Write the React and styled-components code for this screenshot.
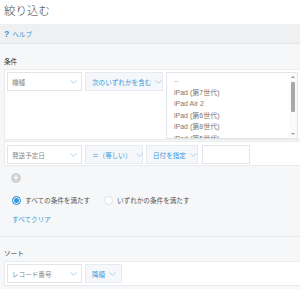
import React from "react";
import styled, { createGlobalStyle } from "styled-components";

const Global = createGlobalStyle`
  html, body { margin: 0; padding: 0; background: #fff; }
  body { font-family: "Liberation Sans", "Noto Sans CJK JP", sans-serif; width: 300px; height: 289px; overflow: hidden; }
  * { box-sizing: border-box; }
`;

const Title = styled.div`
  height: 24px;
  padding: 2px 0 0 4px;
  font-size: 11.5px;
  line-height: 16px;
  color: #444;
  font-family: "Noto Sans CJK JP", sans-serif;
  font-weight: 300;
`;

const HelpBar = styled.div`
  height: 20px;
  background: #eef0f2;
  border-bottom: 1px solid #e4e6e8;
  padding-left: 4px;
  display: flex;
  align-items: center;
  gap: 3px;
  color: #3498db;
  font-size: 6.6px;
  font-family: "Noto Sans CJK JP", sans-serif;
`;

const Q = styled.span`
  font-weight: bold;
  font-size: 8.5px;
  font-family: "Liberation Sans", sans-serif;
`;

const Content = styled.div`
  background: #f6f7f9;
  padding: 0 0 0 4px;
  height: 245px;
  font-family: "Noto Sans CJK JP", sans-serif;
`;

const Label = styled.div`
  font-size: 6.6px;
  line-height: 10px;
  color: #333;
  padding-top: ${(p) => p.$top}px;
  margin-bottom: 3px;
`;

const Card = styled.div`
  background: #fff;
  border: 1px solid #e9ebed;
  border-right: none;
  padding: ${(p) => p.$pad};
  display: flex;
  align-items: flex-start;
  gap: 3px;
  margin-bottom: 1px;
`;

const Select = styled.div`
  width: ${(p) => p.$w}px;
  height: 19px;
  flex: none;
  display: flex;
  align-items: center;
  justify-content: ${(p) => (p.$blue ? "flex-start" : "space-between")};
  gap: 4px;
  padding: 0 4px 0 ${(p) => (p.$blue ? 6 : 4)}px;
  border: 1px solid ${(p) => (p.$blue ? "#e6ebf0" : "#e3e5e7")};
  background: ${(p) => (p.$blue ? "#f5f7fa" : "#fff")};
  color: ${(p) => (p.$blue ? "#3498db" : "#888")};
  font-size: 6.6px;
  white-space: nowrap;
`;

const Input = styled.div`
  width: 48px;
  height: 19px;
  flex: none;
  border: 1px solid #e3e5e7;
  background: #fff;
  margin-left: 1px;
`;

const ListBox = styled.div`
  width: 132px;
  height: 67px;
  flex: none;
  border: 1px solid #e3e5e7;
  background: #fff;
  display: flex;
  overflow: hidden;
`;

const Options = styled.div`
  flex: 1;
  padding: 2px 0 0 7px;
  display: flex;
  flex-direction: column;
  overflow: hidden;
`;

const Option = styled.div`
  font-family: "Liberation Sans", "Noto Sans CJK JP", sans-serif;
  font-size: 7px;
  line-height: 11.6px;
  flex: none;
  color: ${(p) => (p.$muted ? "#aaa" : "#777")};
  white-space: nowrap;
`;

const ScrollBar = styled.div`
  width: 8px;
  flex: none;
  display: flex;
  flex-direction: column;
  align-items: center;
  padding: 2px 0;
  background: #fafafa;
`;

const Arrow = styled.div`
  width: 0;
  height: 0;
  border-left: 2px solid transparent;
  border-right: 2px solid transparent;
  ${(p) => (p.$down ? "border-top: 2px solid #999;" : "border-bottom: 2px solid #999;")}
  margin: 1px 0;
`;

const Thumb = styled.div`
  width: 4px;
  height: 30px;
  margin-top: 3px;
  background: #a8a8a8;
  border-radius: 1px;
`;

const Spacer = styled.div`
  flex: 1;
`;

const AddRow = styled.div`
  padding: 6px 0 0 7px;
  height: 23px;
`;

const AddIcon = styled.div`
  width: 10px;
  height: 10px;
  border-radius: 50%;
  background: #cfd2d5;
  color: #fff;
  font-size: 9px;
  line-height: 10px;
  text-align: center;
  font-family: "Liberation Sans", sans-serif;
  font-weight: bold;
`;

const RadioRow = styled.div`
  display: flex;
  align-items: center;
  height: 16px;
  padding-left: 8px;
  margin-top: 2px;
`;

const RadioItem = styled.div`
  display: flex;
  align-items: center;
  gap: 4px;
  width: ${(p) => p.$w}px;
  font-size: 6.6px;
  color: #555;
  white-space: nowrap;
`;

const Radio = styled.div`
  width: 9px;
  height: 9px;
  border-radius: 50%;
  flex: none;
  ${(p) =>
    p.$on
      ? "background: #3498db; border: 1px solid #3498db; box-shadow: inset 0 0 0 1px #fff;"
      : "background: #fff; border: 1px solid #dfe2e5;"}
`;

const ClearLink = styled.div`
  color: #3498db;
  font-size: 6.6px;
  line-height: 10px;
  padding: 6px 0 0 8px;
  height: 28px;
`;

const Divider = styled.div`
  height: 1px;
  background: #e6e8ea;
  margin-left: -4px;
`;

const Chevron = () => (
  <svg width="7" height="4" viewBox="0 0 7 4" style={{ flex: "none" }}>
    <path d="M0.5 0.5 L3.5 3.3 L6.5 0.5" fill="none" stroke="#9cc5ea" strokeWidth="0.8" />
  </svg>
);

const Sel = ({ w, blue, children }) => (
  <Select $w={w} $blue={blue}>
    <span>{children}</span>
    <Chevron />
  </Select>
);

export default function App() {
  return (
    <>
      <Global />
      <Title>絞り込む</Title>
      <HelpBar>
        <Q>?</Q>
        <span>ヘルプ</span>
      </HelpBar>
      <Content>
        <Label $top={12}>条件</Label>
        <Card $pad="2px 2px 0 2px">
          <Sel w={75}>機種</Sel>
          <Sel w={78} blue>次のいずれかを含む</Sel>
          <ListBox>
            <Options>
              <Option $muted>--</Option>
              <Option>iPad (第7世代)</Option>
              <Option>iPad Air 2</Option>
              <Option>iPad (第6世代)</Option>
              <Option>iPad (第8世代)</Option>
              <Option>iPad (第5世代)</Option>
            </Options>
            <ScrollBar>
              <Arrow />
              <Thumb />
              <Spacer />
              <Arrow $down />
            </ScrollBar>
          </ListBox>
        </Card>
        <Card $pad="3px 2px 1px 2px">
          <Sel w={75}>発送予定日</Sel>
          <Sel w={58} blue>＝（等しい）</Sel>
          <Sel w={52} blue>日付を指定</Sel>
          <Input />
        </Card>
        <AddRow>
          <AddIcon>+</AddIcon>
        </AddRow>
        <RadioRow>
          <RadioItem $w={92}>
            <Radio $on />
            すべての条件を満たす
          </RadioItem>
          <RadioItem $w={100}>
            <Radio />
            いずれかの条件を満たす
          </RadioItem>
        </RadioRow>
        <ClearLink>すべてクリア</ClearLink>
        <Divider />
        <Label $top={11}>ソート</Label>
        <Card $pad="2px 2px 2px 2px">
          <Sel w={75}>レコード番号</Sel>
          <Sel w={37} blue>降順</Sel>
        </Card>
      </Content>
    </>
  );
}
